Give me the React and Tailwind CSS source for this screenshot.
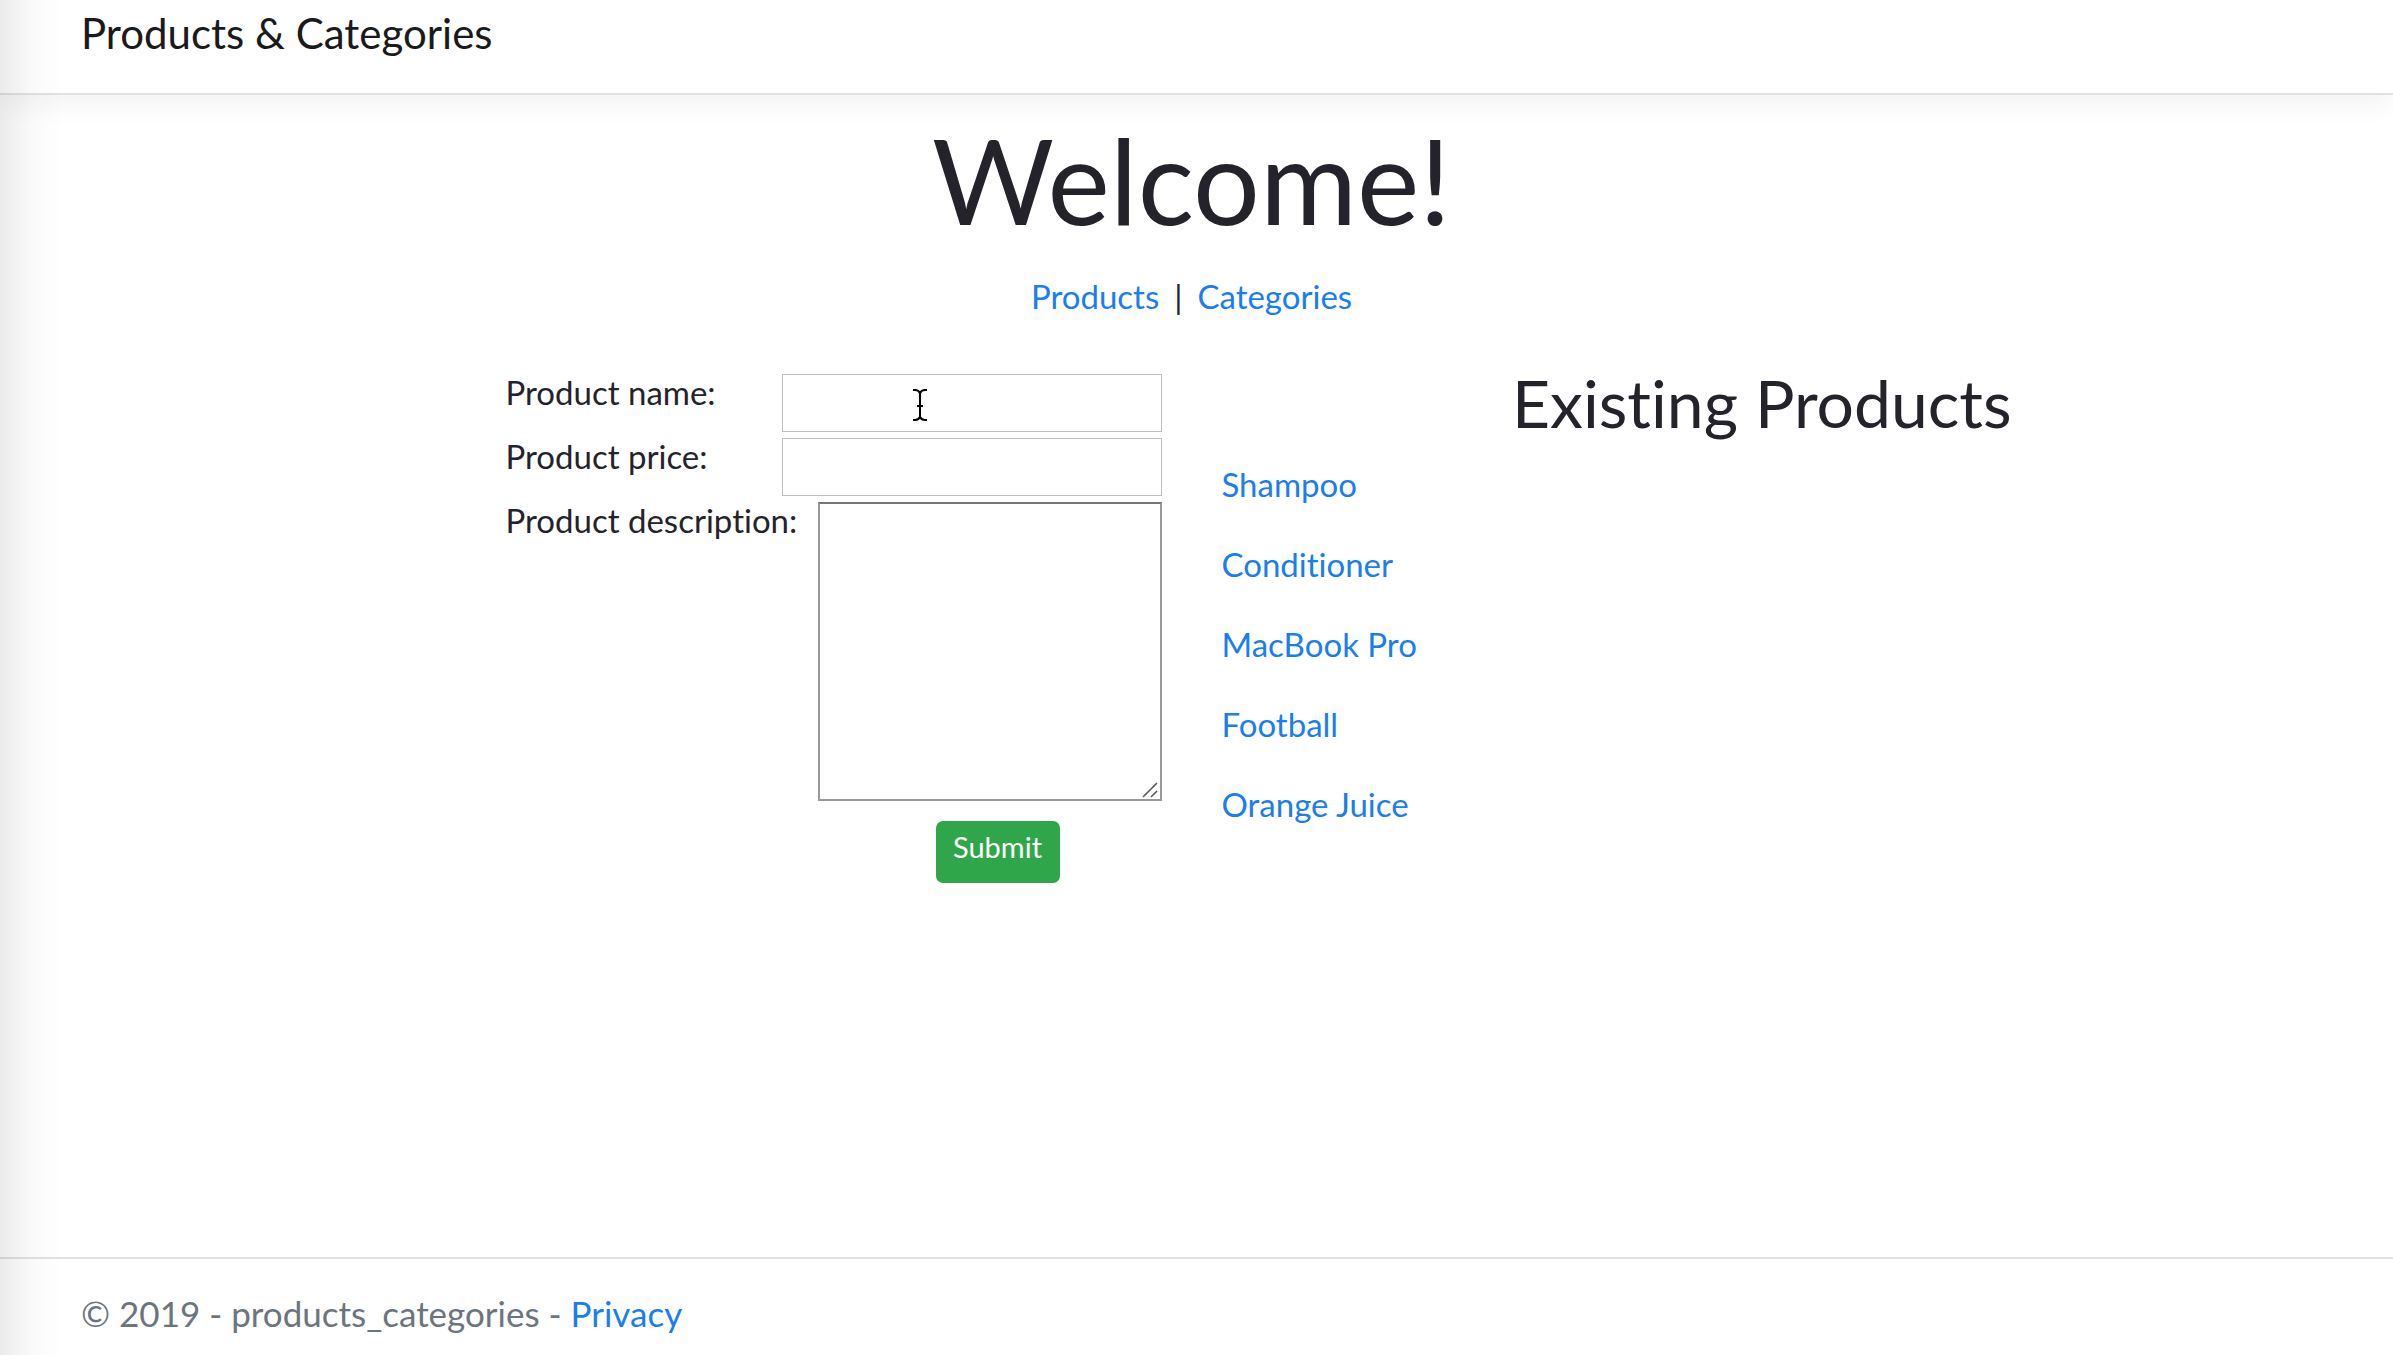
import React from "react";

const products = ["Shampoo", "Conditioner", "MacBook Pro", "Football", "Orange Juice"];

function TextCursor() {
  return (
    <svg
      className="pointer-events-none absolute top-[15px] left-[131px] h-[32px] w-[14px]"
      viewBox="0 0 14 32"
      fill="none"
      stroke="#000"
      strokeWidth="2"
      aria-hidden="true"
    >
      <path d="M0 1h2c2 0 4 1 5 3c1-2 3-3 5-3h2M7 4v24M0 31h2c2 0 4-1 5-3c1 2 3 3 5 3h2M4 17h6" />
    </svg>
  );
}

function ResizeGrip() {
  return (
    <svg
      className="pointer-events-none absolute right-[4px] bottom-[3px] h-[16px] w-[16px]"
      viewBox="0 0 16 16"
      fill="none"
      stroke="#5c5c5c"
      strokeWidth="1.6"
      aria-hidden="true"
    >
      <path d="M1 15L15 1M9 15L15 9" />
    </svg>
  );
}

function Link({ children }) {
  return (
    <a href="#" className="text-[#1a7df0]">
      {children}
    </a>
  );
}

export default function App() {
  return (
    <div className="relative flex min-h-screen flex-col bg-white font-['Lato','Liberation_Sans',sans-serif] text-[33px] text-[#24232b] [font-variant-ligatures:none]">
      <header className="border-b-2 border-[#dee2e6] px-[81px] pb-[27px] shadow-[0_9px_24px_rgba(0,0,0,0.05)]">
        <a href="#" className="text-[42px] leading-[66px] text-[#1a1a1c]">
          Products &amp; Categories
        </a>
      </header>

      <main className="grow pt-[15px] pr-[91px] pl-[81px]">
        <h1 className="text-center text-[118px] leading-[140px]">Welcome!</h1>
        <nav className="mt-[19px] flex justify-center gap-[15px] leading-[54px]">
          <Link>Products</Link>
          <span>|</span>
          <Link>Categories</Link>
        </nav>

        <div className="mt-[51px] grid grid-cols-2 gap-[60px]">
          <form className="flex w-[656px] flex-col gap-[6px] justify-self-end" onSubmit={(e) => e.preventDefault()}>
            <div className="flex items-start justify-between">
              <label htmlFor="name" className="leading-[36px]">Product name:</label>
              <div className="relative">
                <input id="name" type="text" className="block h-[58px] w-[380px] border border-[#bfbfbf] px-2 outline-none" />
                <TextCursor />
              </div>
            </div>
            <div className="flex items-start justify-between">
              <label htmlFor="price" className="leading-[36px]">Product price:</label>
              <input id="price" type="text" className="block h-[58px] w-[380px] border border-[#bfbfbf] px-2 outline-none" />
            </div>
            <div className="flex items-start justify-between">
              <label htmlFor="description" className="leading-[36px]">Product description:</label>
              <div className="relative">
                <textarea id="description" className="block h-[299px] w-[344px] resize-none border-2 border-[#999] border-t-[#767676] outline-none" />
                <ResizeGrip />
              </div>
            </div>
            <button type="submit" className="mt-[14px] mr-[102px] h-[62px] w-[124px] self-end rounded-[7px] bg-[#30a64a] pb-[10px] text-[29px] leading-[42px] text-white">
              Submit
            </button>
          </form>

          <section>
            <h2 className="mb-[27px] text-center text-[66px] leading-[58px]">Existing Products</h2>
            <ul className="flex flex-col gap-[30px] leading-[50px]">
              {products.map((name) => (
                <li key={name}>
                  <Link>{name}</Link>
                </li>
              ))}
            </ul>
          </section>
        </div>
      </main>

      <footer className="border-t-2 border-[#dee2e6] px-[81px] pt-[27px] pb-[15px] text-[35px] leading-[54px] text-[#6c757d]">
        © 2019 - products_categories - <Link>Privacy</Link>
      </footer>

      <div className="pointer-events-none absolute inset-y-0 left-0 w-[64px] bg-linear-to-r from-black/8 via-black/2 to-transparent" />
    </div>
  );
}
